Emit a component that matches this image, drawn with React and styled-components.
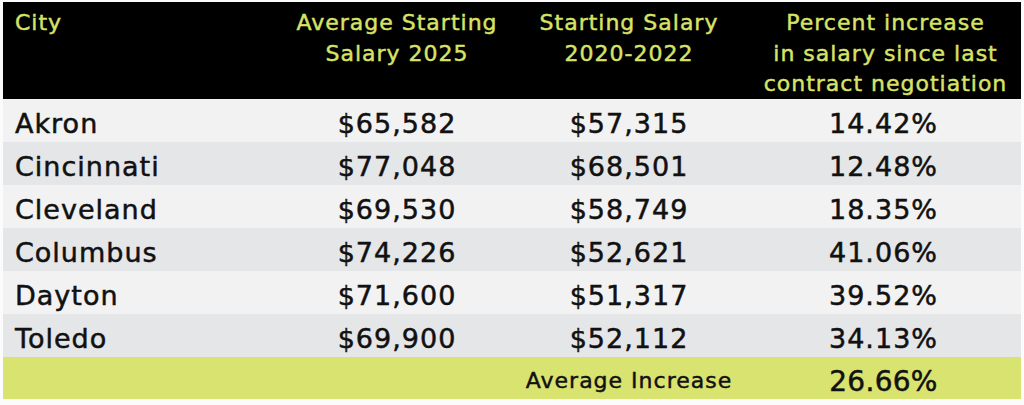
import React from "react";
import styled, { createGlobalStyle } from "styled-components";

const Global = createGlobalStyle`
  html, body { margin: 0; padding: 0; background: #ffffff; }
  body { font-family: "DejaVu Sans", "Liberation Sans", sans-serif; }
`;

const Frame = styled.div`
  width: 1024px;
  height: 405px;
  box-sizing: border-box;
  padding: 2px 3px 5px 3px;
  background: #fbfbfb;
`;

const Table = styled.div`
  display: grid;
  grid-template-columns: 287px 214px 250px 1fr;
  width: 1018px;
`;

const HeadCell = styled.div`
  background: #000;
  color: #d8e366;
  -webkit-text-stroke: 0.45px #d8e366;
  font-size: 22px;
  letter-spacing: 1px;
  line-height: 30.5px;
  height: 97px;
  box-sizing: border-box;
  padding-top: 6px;
  padding-left: ${(p) => (p.$left ? 12 : 0)}px;
  padding-right: ${(p) => (p.$pr ? p.$pr : 0)}px;
  text-align: ${(p) => (p.$left ? "left" : "center")};
`;

const Cell = styled.div`
  background: ${(p) => (p.$alt ? "#e5e6e8" : "#f2f2f2")};
  color: #111;
  -webkit-text-stroke: 0.5px #111;
  font-size: 27px;
  letter-spacing: 1px;
  height: 43px;
  line-height: 37px;
  box-sizing: border-box;
  padding-top: 6px;
  padding-left: ${(p) => (p.$left ? 12 : 0)}px;
  padding-right: ${(p) => (p.$pr ? p.$pr : 0)}px;
  text-align: ${(p) => (p.$left ? "left" : "center")};
  white-space: nowrap;
`;

const FootCell = styled.div`
  background: #d9e36f;
  color: #111;
  height: 42px;
  box-sizing: border-box;
  display: flex;
  align-items: center;
  justify-content: center;
  padding-right: ${(p) => (p.$pr ? p.$pr : 0)}px;
  white-space: nowrap;
`;

const FootLabel = styled.span`
  font-size: 22px;
  letter-spacing: 1px;
  -webkit-text-stroke: 0.45px #111;
  margin-top: 5px;
`;

const FootValue = styled.span`
  font-size: 28px;
  letter-spacing: 0.3px;
  -webkit-text-stroke: 0.5px #111;
  margin-top: 7px;
`;

const rows = [
  ["Akron", "$65,582", "$57,315", "14.42%"],
  ["Cincinnati", "$77,048", "$68,501", "12.48%"],
  ["Cleveland", "$69,530", "$58,749", "18.35%"],
  ["Columbus", "$74,226", "$52,621", "41.06%"],
  ["Dayton", "$71,600", "$51,317", "39.52%"],
  ["Toledo", "$69,900", "$52,112", "34.13%"],
];

export default function App() {
  return (
    <>
      <Global />
      <Frame>
        <Table>
          <HeadCell $left>City</HeadCell>
          <HeadCell>
            Average Starting
            <br />
            Salary 2025
          </HeadCell>
          <HeadCell>
            Starting Salary
            <br />
            2020-2022
          </HeadCell>
          <HeadCell $pr={4}>
            Percent increase
            <br />
            in salary since last
            <br />
            contract negotiation
          </HeadCell>
          {rows.map((r, i) => (
            <React.Fragment key={r[0]}>
              <Cell $alt={i % 2 === 1} $left>
                {r[0]}
              </Cell>
              <Cell $alt={i % 2 === 1}>{r[1]}</Cell>
              <Cell $alt={i % 2 === 1}>{r[2]}</Cell>
              <Cell $alt={i % 2 === 1} $pr={8}>
                {r[3]}
              </Cell>
            </React.Fragment>
          ))}
          <FootCell />
          <FootCell />
          <FootCell>
            <FootLabel>Average Increase</FootLabel>
          </FootCell>
          <FootCell $pr={8}>
            <FootValue>26.66%</FootValue>
          </FootCell>
        </Table>
      </Frame>
    </>
  );
}
